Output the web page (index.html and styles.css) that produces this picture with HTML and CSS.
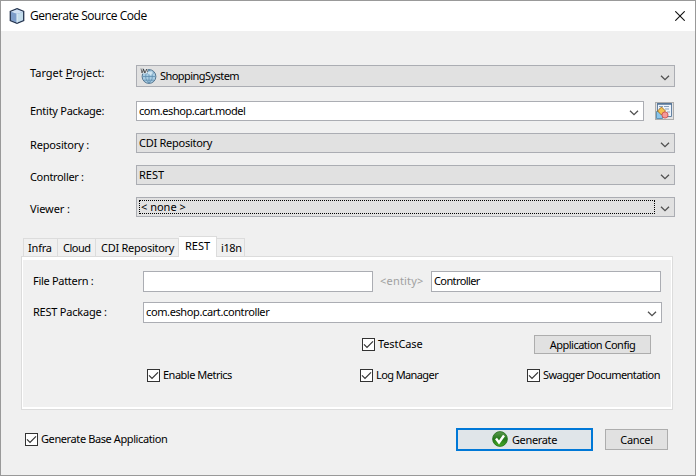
FILE: index.html
```html
<!DOCTYPE html>
<html lang="en">
<head>
<meta charset="utf-8">
<title>Generate Source Code</title>
<link rel="stylesheet" href="styles.css">
</head>
<body>
<main class="dialog">
  <header class="titlebar">
    <svg class="cube" width="16" height="16" viewBox="0 0 16 16"><path d="M8 .7 14.700 3.500v9L8 15.300 1.300 12.500v-9z" fill="#8fabd0" stroke="#263650" stroke-width="1.300"/><path d="M2 3.700 8 1.500l6 2.200-6 2.200z" fill="#cfe0f3"/><path d="M2 3.900l6 2.100v8.600l-6-2.600z" fill="#7c9dca"/><path d="M8 6l6-2.100V12l-6 2.600z" fill="#c3dceb"/><path d="M8 6v8.400" stroke="#e4f0f8"/></svg>
    <h1>Generate Source Code</h1>
    <svg class="close" width="10" height="10" viewBox="0 0 10 10"><path d="M.3.3l9.4 9.4M9.7.3.3 9.7" stroke="#111" stroke-width="1.1"/></svg>
  </header>

  <section class="settings">
    <div class="row project">
      <label>Target <u>P</u>roject:</label>
      <div class="combo">
        <svg class="globe" width="17" height="16" viewBox="0 0 17 16"><circle cx="9" cy="8.500" r="6.900" fill="#a9cde3" stroke="#55758f"/><path d="M2.500 8.500h13M4 12.200h10M4 5h10M9 2v13M9 2C4.600 5 4.600 12 9 15M9 2c4.400 3 4.400 10 0 13" fill="none" stroke="#5f8daf" stroke-width=".8"/><path d="M8 4q3-2 5 1l-2 2-3-1z" fill="#e2f2fa" opacity=".8"/><path d="M.500.500h6.500l1 2-1 3h-6z" fill="#e8edf2"/><path d="M1 .5L2 5l1.500-4L5 5l1.500-4L7.500 4M3 .5L4.500 5" fill="none" stroke="#333" stroke-width=".7"/></svg>
        <span class="t-project">ShoppingSystem</span>
        <svg class="chevron" width="10" height="6" viewBox="0 0 10 6"><path d="M1 .7l4 4 4-4"/></svg>
      </div>
    </div>
    <div class="row entity">
      <label class="t-entity">Entity Package:</label>
      <div class="combo editable"><span class="t-model">com.eshop.cart.model</span><svg class="chevron" width="10" height="6" viewBox="0 0 10 6"><path d="M1 .7l4 4 4-4"/></svg></div>
      <button class="browse" aria-label="Browse packages"><svg width="17" height="16" viewBox="0 0 17 16"><path d="M1.500.500h14v13h-14z" fill="#eef4fb" stroke="#6482a3"/><path d="M1 1h15" stroke="#527294" stroke-width="1.500"/><path d="M3 3.500h4m1 0h5M3 6h3m3 0h4m-2 3h3" stroke="#8aa0b8"/><path d="M.500 8.500h6v7h-6z" fill="#8ac5ea" stroke="#39789f" stroke-width=".7"/><path d="M5.500 4l4 4-4 4-4-4z" fill="#f3c250" stroke="#986017" stroke-width=".8"/><circle cx="9" cy="12" r="3.100" fill="#f49a98" stroke="#cb4747" stroke-width=".8"/></svg></button>
    </div>
    <div class="row">
      <label class="t-repo">Repository :</label>
      <div class="combo"><span class="t-cdi">CDI Repository</span><svg class="chevron" width="10" height="6" viewBox="0 0 10 6"><path d="M1 .7l4 4 4-4"/></svg></div>
    </div>
    <div class="row">
      <label class="t-ctl">Controller :</label>
      <div class="combo"><span class="t-rest">REST</span><svg class="chevron" width="10" height="6" viewBox="0 0 10 6"><path d="M1 .7l4 4 4-4"/></svg></div>
    </div>
    <div class="row viewer">
      <label class="t-view">Viewer :</label>
      <div class="combo"><div class="focus"><span class="t-none">&lt; none &gt;</span></div><svg class="chevron" width="10" height="6" viewBox="0 0 10 6"><path d="M1 .7l4 4 4-4"/></svg></div>
    </div>
  </section>

  <nav class="tabs">
    <span class="tab infra">Infra</span><span class="tab cloud">Cloud</span><span class="tab cdi">CDI Repository</span><span class="tab active">REST</span><span class="tab i18n">i18n</span>
  </nav>
  <section class="panel">
    <div class="field pattern">
      <label class="t-file">File Pattern :</label>
      <div class="input"></div>
      <span class="hint">&lt;entity&gt;</span>
      <div class="input"><span class="t-controller">Controller</span></div>
    </div>
    <div class="field package">
      <label class="t-pack">REST Package :</label>
      <div class="input"><span class="t-cart">com.eshop.cart.controller</span><svg class="chevron" width="10" height="6" viewBox="0 0 10 6"><path d="M1 .7l4 4 4-4"/></svg></div>
    </div>
    <div class="options first">
      <div class="check"><i class="box"><svg width="11" height="11" viewBox="0 0 11 11"><path d="M1 5.300l3 3 6-6"/></svg></i><span class="t-test">TestCase</span></div>
      <button class="config"><span class="t-config">Application Config</span></button>
    </div>
    <div class="options second">
      <div class="check"><i class="box"><svg width="11" height="11" viewBox="0 0 11 11"><path d="M1 5.300l3 3 6-6"/></svg></i><span class="t-metrics">Enable Metrics</span></div>
      <div class="check"><i class="box"><svg width="11" height="11" viewBox="0 0 11 11"><path d="M1 5.300l3 3 6-6"/></svg></i><span class="t-log">Log Manager</span></div>
      <div class="check"><i class="box"><svg width="11" height="11" viewBox="0 0 11 11"><path d="M1 5.300l3 3 6-6"/></svg></i><span class="t-swagger">Swagger Documentation</span></div>
    </div>
  </section>

  <footer class="actions">
    <div class="check"><i class="box"><svg width="11" height="11" viewBox="0 0 11 11"><path d="M1 5.300l3 3 6-6"/></svg></i><span class="t-base">Generate Base Application</span></div>
    <button class="generate"><svg width="16" height="16" viewBox="0 0 16 16"><defs><linearGradient id="green" x1="0" y1="0" x2="0" y2="1"><stop offset="0" stop-color="#5c9a50"/><stop offset=".5" stop-color="#24781b"/><stop offset="1" stop-color="#47ad25"/></linearGradient></defs><circle cx="8" cy="8" r="7.400" fill="url(#green)" stroke="#226f1c" stroke-width=".8"/><path d="M4 7.500l3 4 5-7" fill="none" stroke="#fff" stroke-width="2.400"/></svg><span class="t-generate">Generate</span></button>
    <button class="cancel"><span class="t-cancel">Cancel</span></button>
  </footer>
</main>
</body>
</html>
```
FILE: styles.css
```css
* { box-sizing: border-box; }
body { margin: 0; font: 11px/14px "Noto Sans", sans-serif; color: #000; }
button { font: inherit; color: inherit; padding: 0; border: 1px solid #adadad; border-radius: 0; background: #e1e1e1; }
label, span { white-space: nowrap; }
svg { display: block; flex: none; }
.dialog { width: 696px; height: 476px; border: 1px solid #999; background: #f0f0f0; display: flex; flex-direction: column; overflow: hidden; }
.titlebar { flex: none; height: 30px; background: #fff; display: flex; align-items: center; padding: 0 10px 0 8px; }
.titlebar h1 { margin: 0 auto 0 5px; font: 12px/16px "Open Sans", sans-serif; letter-spacing: -.45px; white-space: nowrap; }
.settings { flex: none; height: 186px; padding: 34px 20px 0 29px; display: flex; flex-direction: column; gap: 12px; }
.row { display: grid; grid-template-columns: 106px 539px; height: 20px; align-items: center; }
.row > label { padding-top: 4px; }
.row.project { height: 22px; margin-bottom: 2px; }
.row.project > label { padding: 0 0 6px; }
.row.entity { grid-template-columns: 106px 508px 20px; }
.row.entity > label { padding-top: 0; }
.browse { width: 19px; height: 18px; margin-left: 11px; display: flex; align-items: center; justify-content: center; }
.combo { height: 100%; border: 1px solid #abadb3; background: #e1e1e1; display: flex; align-items: center; padding: 0 4px 0 2px; }
.combo > span { padding-bottom: 1px; }
.editable, .input { background: #fff; }
.chevron { margin-left: auto; margin-top: 3px; fill: none; stroke: #505050; stroke-width: 1.3; }
.globe { margin: 0 3px 1px 1px; }
.focus { width: 516px; height: 14px; border: 1px dotted #000; display: flex; align-items: center; padding-left: 1px; }
.tabs { flex: none; height: 20px; margin: 19px 0 0 22px; display: flex; align-items: flex-end; }
.tab { height: 18px; border: 1px solid #dcdcdc; border-bottom: 0; border-left-width: 0; padding: 2px 0 0 4px; }
.infra { width: 35px; border-left-width: 1px; letter-spacing: -.2px; }
.cloud { width: 38px; padding-left: 5px; letter-spacing: -.5px; }
.cdi { width: 83px; padding-left: 5px; letter-spacing: -.27px; }
.active { position: relative; width: 38px; height: 21px; margin-bottom: -1px; padding-left: 6px; background: #fff; }
.i18n { width: 28px; letter-spacing: -.4px; }
.panel { flex: none; width: 652px; height: 154px; margin-left: 20px; border: 1px solid #dcdcdc; padding: 14px 10px 0 11px; box-shadow: inset 1px 3px #fff, inset -1px -2px #fff; }
.field { display: grid; height: 21px; align-items: center; }
.field > label { margin-top: -1px; }
.pattern { grid-template-columns: 110px 230px 58px 230px; }
.package { grid-template-columns: 110px 519px; margin-top: 10px; }
.input { height: 21px; border: 1px solid #abadb3; display: flex; align-items: center; padding: 0 4px 0 2px; }
.input > span { margin-top: -1px; }
.hint { color: #a0a0a0; padding-left: 7px; letter-spacing: .2px; margin-top: -1px; }
.options { display: grid; align-items: center; }
.first { height: 19px; margin-top: 12px; padding-left: 329px; grid-template-columns: 172px 117px; }
.config { height: 19px; line-height: 14px; }
.second { margin-top: 15px; height: 13px; padding-left: 114px; grid-template-columns: 213px 167px auto; }
.check { display: flex; align-items: center; height: 13px; }
.check > span { margin-top: -1px; }
.box { width: 13px; height: 13px; border: 1px solid #333; background: #fff; margin-right: 3px; flex: none; }
.box path { fill: none; stroke: #333; stroke-width: 1.2; }
.actions { display: grid; grid-template-columns: 431px 137px 75px; margin: 18px 0 0 24px; height: 23px; align-items: center; }
.actions > .check { margin-top: -1px; }
.generate { height: 23px; border: 2px solid #0078d7; background: #e0e5e9; display: flex; align-items: center; justify-content: center; gap: 4px; }
.generate svg { margin-top: -1px; }
.cancel { width: 63px; height: 21px; margin-left: 12px; }

/* Compact tracking, tuned to the dialog's narrow UI lettering */
.t-project { letter-spacing: -.55px; }
.t-entity { letter-spacing: -.27px; }
.t-model { letter-spacing: -.45px; }
.t-repo { letter-spacing: -.17px; }
.t-ctl { letter-spacing: -.33px; }
.t-view { letter-spacing: -.1px; }
.t-cdi { letter-spacing: -.27px; }
.t-file { letter-spacing: -.3px; }
.t-pack { letter-spacing: -.22px; }
.t-controller { letter-spacing: -.6px; }
.t-cart { letter-spacing: -.38px; }
.t-test { letter-spacing: -.1px; }
.t-config { letter-spacing: -.5px; }
.t-metrics { letter-spacing: -.5px; }
.t-log { letter-spacing: -.6px; }
.t-swagger { letter-spacing: -.55px; }
.t-base { letter-spacing: -.4px; }
.t-generate { letter-spacing: -.35px; }
.t-cancel { letter-spacing: -.3px; }
```
